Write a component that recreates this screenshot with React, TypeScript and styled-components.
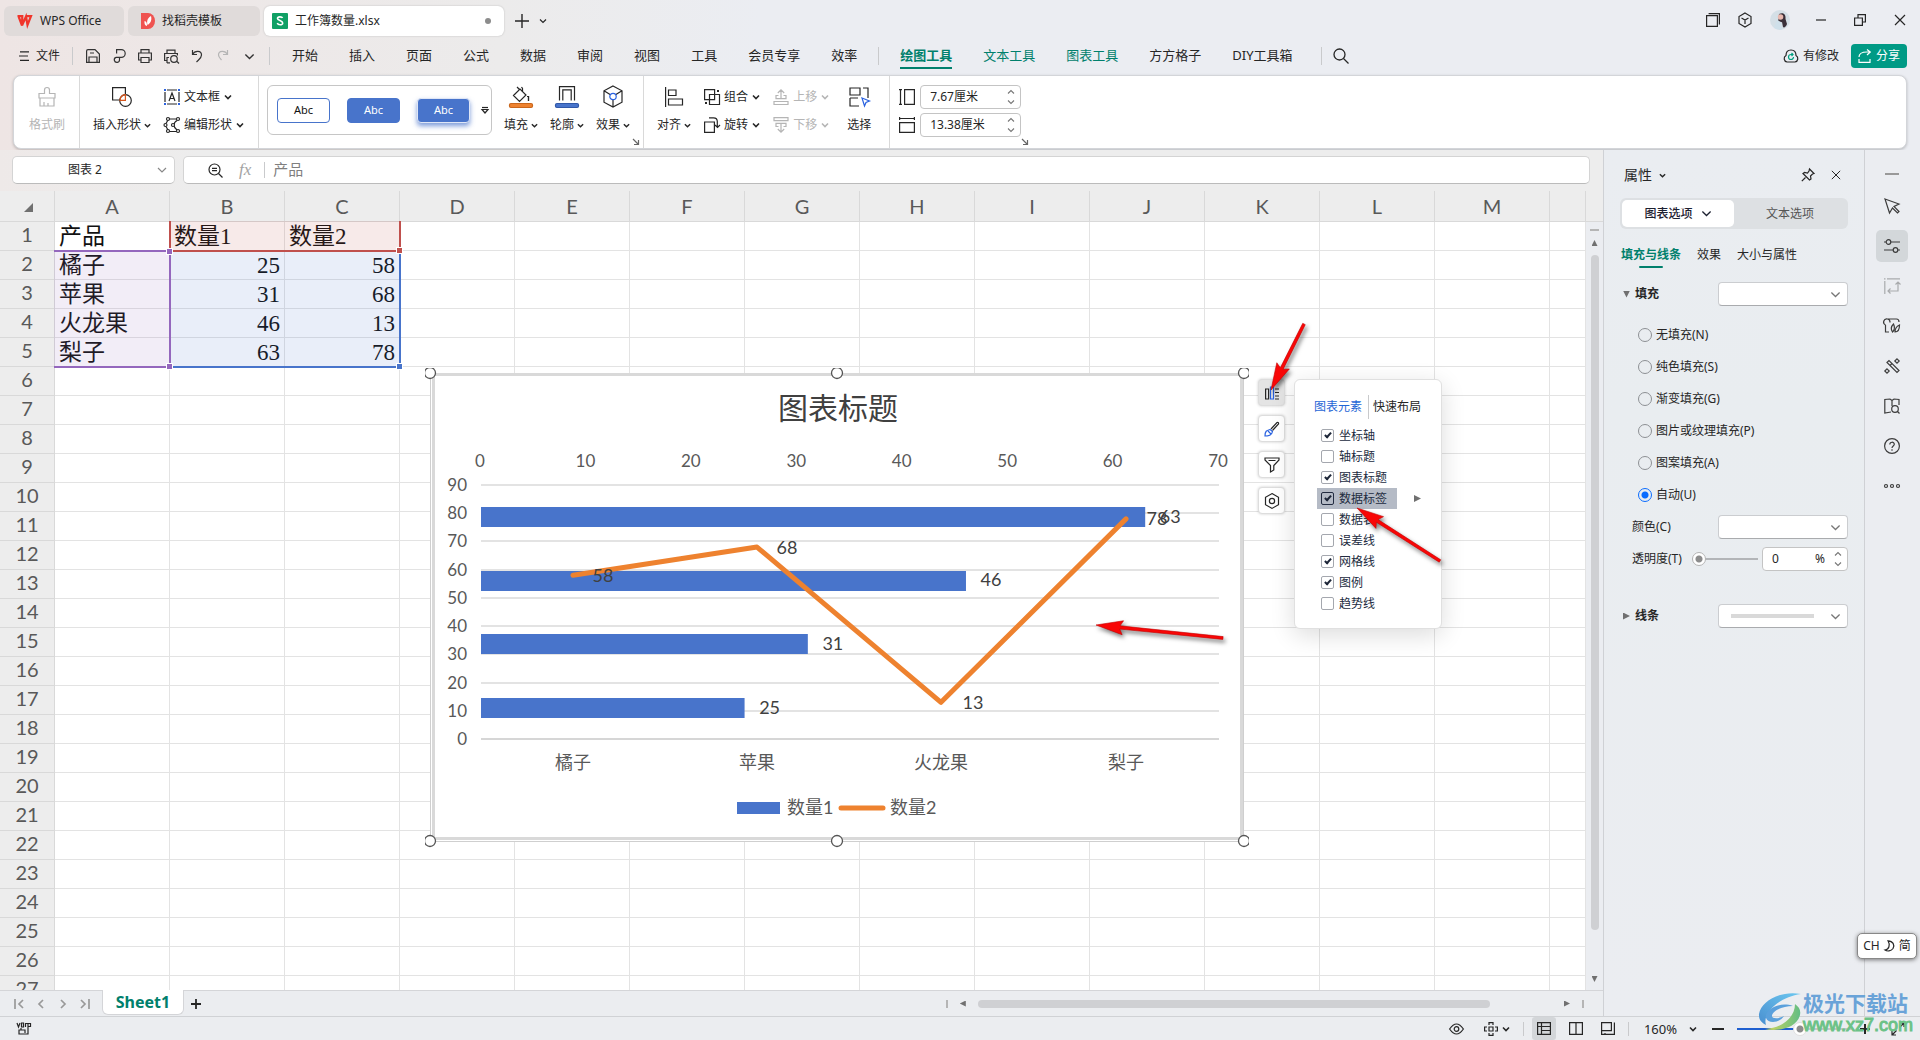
import React from "react";
import styled, { createGlobalStyle, css } from "styled-components";

const ui = `"Noto Sans", "Noto Sans CJK SC", sans-serif`;
const green = "#00806c";
const blue = "#4874cb";
const orange = "#ee822f";

const Global = createGlobalStyle`
  *, *::before, *::after { box-sizing: border-box; }
  body { margin: 0; overflow: hidden; background: #ebedf1; }
  button, input, select { font: inherit; color: inherit; margin: 0; }
  button { border: 0; padding: 0; background: none; white-space: nowrap; }
`;

const App_ = styled.div`
  display: flex; flex-direction: column; height: 100vh; overflow: hidden;
  font: 12px/20px ${ui}; color: #262626;
  background: linear-gradient(90deg, #eee5e4 0, #ecebeb 500px, #ebedf2 760px);
`;

/* ---------- icons ---------- */
type IcProps = { w?: number; h?: number; box?: string; sw?: number; children: React.ReactNode };
const Svg = styled.svg`display: block; flex: none; fill: none; stroke: currentColor; overflow: visible;`;
const Ic = ({ w = 16, h, box, sw = 1.2, children }: IcProps) => (
  <Svg width={w} height={h ?? w} viewBox={box ?? `0 0 ${w} ${h ?? w}`} strokeWidth={sw} aria-hidden="true">{children}</Svg>
);
const Chev = ({ s = 7, sw = 1.6 }: { s?: number; sw?: number }) => (
  <Ic w={s} box="0 0 8 8" sw={sw}><path d="M1 2.5l3 3 3-3" /></Ic>
);
const Close = ({ s = 12 }: { s?: number }) => <Ic w={s} box="0 0 12 12"><path d="M1 1l10 10M11 1L1 11" /></Ic>;

/* ---------- title bar ---------- */
const TitleBar = styled.header`display: flex; align-items: flex-start; gap: 4px; padding: 6px 14px 3px 4px; flex: none;`;
const DocTab = styled.button<{ $w: number; $on?: boolean }>`
  display: flex; align-items: center; gap: 7px; width: ${p => p.$w}px; height: 30px; border-radius: 6px;
  padding: 0 ${p => (p.$on ? 13 : 12)}px 0 ${p => (p.$on ? 8 : 13)}px;
  background: ${p => (p.$on ? "#fff" : "#e0dbda")};
  ${p => p.$on && css`box-shadow: 0 0 2px #bbb;`}
`;
const Dot = styled.i`width: 6px; height: 6px; border-radius: 50%; background: #8c8c8c; margin-left: auto;`;
const NewTab = styled.div`display: flex; align-items: center; gap: 10px; height: 30px; padding-left: 7px;`;
const PlainBtn = styled.button`display: flex; align-items: center; justify-content: center; gap: 4px;`;
const WinControls = styled.div`display: flex; align-items: center; gap: 18px; height: 28px; margin-left: auto;`;
const WinEnd = styled.div`display: flex; align-items: center; gap: 28px; padding-left: 8px;`;

/* ---------- menu bar ---------- */
const MenuBar = styled.nav`display: flex; align-items: center; height: 34px; margin-bottom: 2px; padding: 0 13px 0 19px; flex: none;`;
const FileBtn = styled(PlainBtn)`gap: 7px;`;
const VSep = styled.i<{ $l: number; $r: number; $h?: number }>`
  flex: none; width: 1px; height: ${p => p.$h ?? 18}px; margin: 0 ${p => p.$r}px 0 ${p => p.$l}px; background: #c9cacc;
`;
const QuickBtn = styled.button<{ $dim?: boolean }>`
  display: flex; align-items: center; justify-content: center; width: 26px; height: 26px; color: ${p => (p.$dim ? "#b5b5b5" : "#333")};
`;
const MenuGroup = styled.div`display: flex; gap: 31px;`;
const MenuItem = styled.button<{ $tone?: string }>`
  font-size: 13px; line-height: 20px; padding: 0 0 2px; border: solid transparent; border-width: 2px 0;
  ${p => p.$tone && css`color: ${green};`}
  ${p => p.$tone === "on" && css`font-weight: 700; border-bottom-color: ${green};`}
`;
const MenuRight = styled.div`display: flex; align-items: center; gap: 12px; margin-left: auto;`;
const ShareBtn = styled(PlainBtn)`width: 56px; height: 24px; border-radius: 4px; background: #009a85; color: #fff;`;

/* ---------- ribbon ---------- */
const Ribbon = styled.section`
  display: flex; flex: none; margin: 0 13px 1px; height: 74px; border-radius: 8px; background: #fff;
  border: 1px solid #d3d5d9; box-shadow: 0 1px 3px rgba(0,0,0,.22);
`;
const Group = styled.div<{ $pl?: number; $pr?: number; $gap?: number }>`
  display: flex; flex: none; gap: ${p => p.$gap ?? 12}px; padding: 7px ${p => p.$pr ?? 13}px 0 ${p => p.$pl ?? 13}px;
  & + & { border-left: 1px solid #d9d9d9; }
`;
const Big = styled.button<{ $dim?: boolean }>`
  display: flex; flex-direction: column; align-items: center; height: 56px; color: ${p => (p.$dim ? "#b5b5b5" : "#262626")};
`;
const BigIcon = styled.span`display: flex; align-items: center; height: 28px;`;
const BigLabel = styled.span`display: flex; align-items: center; gap: 3px; height: 28px;`;
const Stack = styled.div<{ $end?: boolean }>`display: flex; flex-direction: column; padding-right: ${p => (p.$end ? 5 : 0)}px;`;
const Small = styled.button<{ $dim?: boolean }>`
  display: flex; align-items: center; gap: 4px; height: 28px; color: ${p => (p.$dim ? "#b5b5b5" : "#262626")};
`;
const Gallery = styled.div`
  display: flex; align-items: center; justify-content: space-between; width: 225px; height: 50px; margin-top: 2px; padding: 0 3px 0 9px;
  border: 1px solid #c6c6c6; border-radius: 6px;
`;
const Styles = styled.div`display: flex; gap: 17px;`;
const Style = styled.button<{ $v: number }>`
  width: 53px; height: 25px; border-radius: 4px; border: 1px solid ${blue}; font-size: 11px; line-height: 22px;
  background: ${p => (p.$v ? blue : "#fff")}; color: ${p => (p.$v ? "#fff" : "#111")};
  ${p => p.$v === 2 && css`border-color: #dfe6f6; box-shadow: 0 3px 5px rgba(72,116,203,.7);`}
`;
const Launcher = styled.button`align-self: flex-end; margin-bottom: 2px; margin-left: -10px; color: #666;`;
const SizeLauncher = styled(Launcher)`margin-left: 0;`;
const SizeRow = styled.label`display: flex; align-items: center; gap: 5px; height: 28px;`;
const Spin = styled.span<{ $w: number }>`
  display: flex; align-items: center; width: ${p => p.$w}px; height: 24px; padding: 0 5px 0 9px;
  border: 1px solid #c4c4c4; border-radius: 4px; background: #fff;
`;
const SpinInput = styled.input`flex: 1; min-width: 0; border: 0; padding: 0; outline: 0; background: none; font-size: 12px;`;

const BigB = ({ icon, label, dim, drop = true }: { icon: React.ReactNode; label: string; dim?: boolean; drop?: boolean }) => (
  <Big $dim={dim}><BigIcon>{icon}</BigIcon><BigLabel>{label}{drop && <Chev />}</BigLabel></Big>
);
const SmallB = ({ icon, label, dim }: { icon: React.ReactNode; label: string; dim?: boolean }) => (
  <Small $dim={dim}>{icon}{label}<Chev s={8} /></Small>
);
const Arrows = () => <Ic w={8} h={16} sw={1.1}><path d="M1 4.500l3-3 3 3M1 11.500l3 3 3-3" stroke="#777" /></Ic>;
const LaunchIcon = () => <Ic w={8} box="0 0 8 8"><path d="M1 1l5 5M6.500 2v4.500H2" /></Ic>;

/* ---------- body ---------- */
const Body = styled.div`display: flex; flex: 1; min-height: 0;`;
const Left = styled.main`display: flex; flex-direction: column; flex: 1; min-width: 0; background: linear-gradient(90deg, #eee9e8, #ededed 200px);`;
const FormulaRow = styled.div`display: flex; gap: 8px; flex: none; padding: 6px 13px 7px 12px;`;
const NameBox = styled.label`
  display: flex; align-items: center; width: 163px; height: 28px; padding: 0 7px 0 0; background: #fff;
  border: 1px solid #d4d4d4; border-bottom-color: #bbb; border-radius: 5px;
`;
const NameInput = styled.input`flex: 1; min-width: 0; border: 0; outline: 0; padding: 0; text-align: center; background: none;`;
const FormulaBox = styled.label`
  display: flex; align-items: center; flex: 1; height: 28px; padding-left: 24px; background: #fff;
  border: 1px solid #d4d4d4; border-bottom-color: #bbb; border-radius: 5px;
`;
const Fx = styled.span`font: italic 17px "Liberation Serif", serif; color: #a3a3a3; margin-left: 16px;`;
const FormulaInput = styled.input`flex: 1; border: 0; outline: 0; padding: 0 0 2px; background: none; font-size: 15px; line-height: 20px; color: #7f7f7f;`;

const SheetArea = styled.div`display: flex; flex: 1; min-height: 0;`;
const Canvas = styled.div`position: relative; flex: 1; min-width: 0; overflow: hidden; background: #fff;`;
const Grid = styled.table`
  table-layout: fixed; width: 100%; border-collapse: separate; border-spacing: 0;
  th, td { padding: 0; height: 29px; border-right: 1px solid #e3e3e3; border-bottom: 1px solid #e3e3e3; overflow: hidden; white-space: nowrap; }
  th { background: #ededed; color: #595959; font: 400 20px/24px Lato, sans-serif; border-color: #d9d9d9; vertical-align: top; }
  thead th { height: 31px; line-height: 30px; }
  td { font: 23px/28px "Liberation Serif", "Noto Sans CJK SC", serif; color: #111; }
`;
const Col = styled.col<{ $w?: number }>`${p => p.$w && css`width: ${p.$w}px;`}`;
const CellText = styled.div<{ $num: boolean }>`height: 28px; padding: 1px 4px 0; line-height: 28px; text-align: ${p => (p.$num ? "right" : "left")};`;
const Corner = styled.i`display: block; margin: 12px 0 0 24px; width: 9px; height: 9px; background: #707070; clip-path: polygon(100% 0, 100% 100%, 0 100%);`;

const Range = styled.div<{ $c: number; $r: number; $cs: number; $rs: number; $color: string; $fill: string; $sides: string }>`
  position: absolute; pointer-events: none;
  left: ${p => 54 + 115 * p.$c}px; top: ${p => 30 + 29 * p.$r}px;
  width: ${p => 115 * p.$cs + 2}px; height: ${p => 29 * p.$rs + 2}px;
  border: 0 solid ${p => p.$color}; border-width: ${p => p.$sides}; background: ${p => p.$fill}; background-clip: padding-box;
`;
const Knob = styled.i<{ $x: string; $y: string; $color: string }>`
  position: absolute; width: 7px; height: 7px; border: 1px solid #fff; background: ${p => p.$color};
  ${p => p.$x}: -4px; ${p => p.$y}: -4px;
`;

const ChartBox = styled.figure`position: absolute; left: 425px; top: 177px; margin: 0; width: 824px; height: 480px;`;
const ArrowLayer = styled.div`position: absolute; left: 1090px; top: 119px; width: 360px; height: 340px; pointer-events: none; filter: drop-shadow(2px 3px 2px rgba(0,0,0,.5));`;
const ChartTools = styled.div`position: absolute; left: 1258px; top: 188px; display: flex; flex-direction: column; gap: 9px;`;
const ToolBtn = styled.button<{ $on?: boolean }>`
  display: flex; align-items: center; justify-content: center; width: 27px; height: 27px; border-radius: 4px;
  background: ${p => (p.$on ? "#e4e4e4" : "#fff")}; border: 1px solid #ddd; box-shadow: 0 0 3px rgba(0,0,0,.2);
`;
const Popup = styled.section`
  position: absolute; left: 1294px; top: 188px; width: 148px; padding: 15px 20px 14px 19px; background: #fff; border: 1px solid #e0e0e0;
  border-radius: 6px; box-shadow: 0 6px 24px rgba(0,0,0,.14);
`;
const PopupTabs = styled.div`display: flex; align-items: center; height: 24px; margin-bottom: 6px;`;
const PopupTab = styled.button<{ $on?: boolean }>`color: ${p => (p.$on ? "#1f66d6" : "#262626")};`;
const CheckList = styled.ul`list-style: none; margin: 0; padding: 0;`;
const CheckRow = styled.li`display: flex; align-items: center; justify-content: space-between; height: 21px; padding-left: 3px;`;
const CheckLabel = styled.label<{ $on?: boolean }>`
  display: flex; align-items: center; gap: 5px; width: 80px; height: 21px; padding-left: 4px; color: #222b40;
  background: ${p => (p.$on ? "#b5bbc6" : "none")};
`;
const Check = styled.input<{ $on?: boolean }>`
  appearance: none; width: 13px; height: 13px; border: 1px solid ${p => (p.$on ? "#222b40" : "#a4a7ae")}; border-radius: 2px;
  display: grid; place-items: center;
  &:checked::after { content: ""; width: 4px; height: 7px; border: solid #1d2638; border-width: 0 2px 2px 0; transform: rotate(42deg); margin-bottom: 2px; }
`;
const Tri = styled.i<{ $d: "r" | "d" | "l" | "u"; $s?: number }>`
  flex: none; width: ${p => p.$s ?? 6}px; height: ${p => p.$s ?? 6}px; background: #707070;
  clip-path: polygon(${p => ({ r: "0 0, 100% 50%, 0 100%", l: "100% 0, 0 50%, 100% 100%", d: "0 0, 100% 0, 50% 100%", u: "0 100%, 50% 0, 100% 100%" }[p.$d])});
`;

const VScroll = styled.div`
  display: flex; flex-direction: column; align-items: center; gap: 9px; width: 17px; margin-top: 30px; padding: 7px 0 8px;
  border-top: 1px solid #d9d9d9; background: #ebedf1; flex: none;
`;
const VThumb = styled.i`flex: 1; width: 8px; margin-bottom: 37px; border-radius: 4px; background: #cfd0d3;`;
const SplitV = styled.i`width: 9px; height: 2px; background: #b5b5b5;`;

const SheetBar = styled.div`display: flex; align-items: center; flex: none; height: 26px; border-top: 1px solid #d4d5d8; background: #ebedf0;`;
const NavBtns = styled.div`display: flex; align-items: center; gap: 13px; width: 102px; padding-left: 14px; color: #999;`;
const SheetTab = styled.button`
  align-self: flex-start; height: 25px; margin-top: -1px; width: 82px; background: #fff; color: ${green}; font-size: 16px; font-weight: 700; line-height: 24px;
  border: 1px solid #d4d5d8; border-top: 0; border-radius: 0 0 6px 6px;
`;
const HScroll = styled.div`display: flex; flex: none; align-items: center; gap: 12px; width: 41%; margin-left: auto; padding-right: 19px;`;
const HThumb = styled.i`flex: 1; height: 8px; margin-right: 62px; border-radius: 4px; background: #cfd0d3;`;
const SplitH = styled.i`width: 2px; height: 8px; background: #b5b5b5;`;

/* ---------- property panel ---------- */
const Panel = styled.aside`flex: none; width: 261px; padding: 13px 16px 0; border-left: 1px solid #cfd1d5; background: linear-gradient(180deg, #eaedf1, #e9edf0 30%, #ebedf1);`;
const PanelHead = styled.div`display: flex; align-items: center; gap: 16px; height: 24px; padding: 0 7px 0 4px; margin-bottom: 11px;`;
const PanelTitle = styled.button`display: flex; align-items: center; gap: 7px; margin-right: auto; font-size: 14px;`;
const Segment = styled.div`display: flex; height: 31px; padding: 2px; border-radius: 6px; background: #dde0e3;`;
const SegBtn = styled.button<{ $on?: boolean }>`
  display: flex; align-items: center; justify-content: center; gap: 8px; flex: 1; border-radius: 5px;
  ${p => (p.$on ? css`background: #fff; font-weight: 500; color: #1c2030;` : css`color: #555;`)}
`;
const PTabs = styled.div`display: flex; gap: 16px; margin: 15px 0 13px 1px;`;
const PTab = styled.button<{ $on?: boolean }>`
  display: flex; flex-direction: column; align-items: center; line-height: 22px; height: 25px;
  ${p => p.$on && css`color: ${green}; font-weight: 700; &::after { content: ""; width: 24px; height: 2px; border-radius: 1px; background: ${green}; }`}
`;
const Field = styled.div<{ $h?: number }>`display: flex; align-items: center; justify-content: space-between; height: ${p => p.$h ?? 32}px;`;
const SectionBtn = styled.button`display: flex; align-items: center; gap: 5px; padding-left: 3px; font-weight: 700;`;
const SelectBox = styled.span`
  position: relative; display: flex; align-items: center; width: 130px; height: 24px; padding: 0 6px 0 12px; background: #fff;
  border: 1px solid #cbcdd0; border-bottom-color: #a9abae; border-radius: 4px; color: #777;
`;
const Select = styled.select`position: absolute; inset: 0; width: 100%; appearance: none; border: 0; background: none; outline: 0;`;
const LineSample = styled.i`width: 83px; height: 4px; background: #d9d9d9;`;
const SelChev = styled.span`margin-left: auto;`;
const Radios = styled.div`display: flex; flex-direction: column; padding: 13px 0 0 18px;`;
const RadioLabel = styled.label`display: flex; align-items: center; gap: 4px; height: 32px;`;
const Radio = styled.input`
  appearance: none; width: 14px; height: 14px; border: 1px solid #8d9094; border-radius: 50%;
  &:checked { border-color: #0a6cff; background: radial-gradient(circle, #0a6cff 0 3px, transparent 4px); }
`;
const FieldLabel = styled.label`padding-left: 12px;`;
const Slider = styled.input<{ $w: number; $fill?: string }>`
  appearance: none; width: ${p => p.$w}px; height: 14px; background: none;
  &::-webkit-slider-runnable-track { height: 2px; background: ${p => p.$fill ?? "#b3b5b8"}; }
  &::-webkit-slider-thumb { appearance: none; width: 14px; height: 14px; margin-top: -6px; border-radius: 50%; border: 1px solid ${p => (p.$fill ? "#e0e0e0" : "#b5b5b5")}; background: radial-gradient(circle, #8c8c8c 0 3px, #fff 4px); }
`;
const AlphaSlider = styled(Slider)`margin: 0 4px 0 auto;`;
const ZoomSlider = styled(Slider)`margin-left: 5px;`;

const SideBar = styled.nav`flex: none; width: 56px; display: flex; flex-direction: column; align-items: center; gap: 8px; padding: 8px 1px 0 0; border-left: 1px solid #cfd1d5; background: #ebedf1;`;
const SideBtn = styled.button<{ $on?: boolean; $dim?: boolean }>`
  display: flex; align-items: center; justify-content: center; width: 32px; height: 32px; border-radius: 5px;
  background: ${p => (p.$on ? "#d3d7da" : "none")}; color: ${p => (p.$dim ? "#a9abad" : "#3c3c3c")};
`;
const SideMin = styled(SideBtn)`height: 32px; margin-bottom: -8px; color: #999;`;

/* ---------- status bar ---------- */
const Status = styled.footer`display: flex; align-items: center; flex: none; height: 24px; padding: 0 15px 0 17px; border-top: 1px solid #d0d2d5; background: #ebedf0;`;
const StatusRight = styled.div`display: flex; align-items: center; margin-left: auto; gap: 8px;`;
const ViewBtn = styled.button<{ $on?: boolean }>`display: flex; align-items: center; justify-content: center; width: 24px; height: 23px; background: ${p => (p.$on ? "#d3d6d9" : "none")}; border-radius: 3px;`;
const Zoom = styled.button`display: flex; align-items: center; gap: 12px; font-size: 13px; margin: 0 7px;`;

const ImeBadge = styled.div`
  position: absolute; right: 3px; bottom: 81px; width: 60px; height: 26px; display: flex; align-items: center; justify-content: center; gap: 4px;
  background: #fff; border: 1px solid #888; border-radius: 5px; box-shadow: 0 1px 4px rgba(0,0,0,.5);
`;
const Watermark = styled.div`position: absolute; right: 10px; bottom: 6px; display: flex; align-items: center; gap: 2px; pointer-events: none;`;
const WmText = styled.div`display: flex; flex-direction: column; width: 107px; white-space: nowrap;`;
const WmTop = styled.span`font-size: 21px; line-height: 26px; font-weight: 700; color: #6aa3d8;`;
const WmUrl = styled.span`font: 400 18px/18px "Liberation Sans", sans-serif; color: #6cc287; -webkit-text-stroke: 1px #6cc287;`;

/* ---------- data ---------- */
const cols = "ABCDEFGHIJKLM".split("");
const cells: (string | number)[][] = [["产品", "数量1", "数量2"], ["橘子", 25, 58], ["苹果", 31, 68], ["火龙果", 46, 13], ["梨子", 63, 78]];
const elements: [string, boolean][] = [["坐标轴", true], ["轴标题", false], ["图表标题", true], ["数据标签", true], ["数据表", false], ["误差线", false], ["网格线", true], ["图例", true], ["趋势线", false]];
const fills = ["无填充(N)", "纯色填充(S)", "渐变填充(G)", "图片或纹理填充(P)", "图案填充(A)", "自动(U)"];

const Label = styled.text<{ $size?: number; $c?: string }>`
  font: ${p => p.$size ?? 18}px Lato, "Noto Sans CJK SC", sans-serif; fill: ${p => p.$c ?? "#404040"};
`;

const Chart = () => {
  const x = (v: number) => 481 + (v * 738) / 70;
  const y = (v: number) => 739 - (v * 254) / 90;
  const series2: [number, number, number][] = [[573, 58, 603], [757, 68, 787], [941, 13, 973], [1126, 78, 1157]];
  const bars = [25, 31, 46, 63];
  return (
    <ChartBox aria-label="图表标题">
      <svg width="824" height="480" viewBox="425 368 824 480">
        <rect x="430.500" y="373.500" width="813" height="468" fill="#fff" stroke="#cfcfcf" />
        <rect x="433.500" y="374.500" width="808" height="464" fill="#fff" stroke="#d9d9d9" strokeWidth="3" />
        {Array.from({ length: 10 }, (_, i) => (
          <g key={i}>
            <path d={`M481 ${Math.round(y(i * 10))}H1219`} stroke={i ? "#e3e3e3" : "#d6d6d6"} strokeWidth="2" />
            <Label x="467" y={y(i * 10) + 6} textAnchor="end" $size={17} $c="#595959">{i * 10}</Label>
          </g>
        ))}
        {Array.from({ length: 8 }, (_, i) => (
          <Label key={i} x={x(i * 10) - 1} y="467" textAnchor="middle" $size={17} $c="#595959">{i * 10}</Label>
        ))}
        {bars.map((v, i) => <rect key={v} x="481" y={698 - Math.round(i * 63.7)} width={x(v) - 481} height="20" fill={blue} />)}
        <polyline points={series2.map(([px, v]) => `${px},${y(v)}`).join(" ")} fill="none" stroke={orange} strokeWidth="5" strokeLinecap="round" strokeLinejoin="round" />
        {bars.map((v, i) => <Label key={v} x={x(v) + 25} y={(i === 3 ? 523 : 714 - i * 64)} textAnchor="middle">{v}</Label>)}
        {series2.map(([, v, lx]) => <Label key={v} x={lx} y={v === 78 ? 525 : v === 68 ? 554 : v === 58 ? 582 : 709} textAnchor="middle">{v}</Label>)}
        <Label x="838" y="419" textAnchor="middle" $size={30}>图表标题</Label>
        {series2.map(([px], i) => <Label key={px} x={px} y="769" textAnchor="middle" $c="#595959">{cells[i + 1][0]}</Label>)}
        <rect x="737" y="802" width="43" height="12" fill={blue} />
        <Label x="787" y="814" $c="#595959">数量1</Label>
        <path d="M841 808H883" stroke={orange} strokeWidth="5" strokeLinecap="round" />
        <Label x="890" y="814" $c="#595959">数量2</Label>
        {[373, 841].map(cy => [430, 837, 1244].map(cx => <circle key={`${cx}-${cy}`} cx={cx} cy={cy} r="5.500" fill="#fff" stroke="#555" strokeWidth="1.300" />))}
      </svg>
    </ChartBox>
  );
};

const Arrow = ({ tip, tail }: { tip: [number, number]; tail: [number, number] }) => {
  const dx = tail[0] - tip[0], dy = tail[1] - tip[1], l = Math.hypot(dx, dy);
  const at = (a: number, b: number) => `${tip[0] + (dx * a - dy * b) / l},${tip[1] + (dy * a + dx * b) / l}`;
  return <polygon fill="#f80606" stroke="#c40000" strokeWidth=".6" points={[at(0, 0), at(27, 7), at(24, 1.6), at(l, 1.4), at(l, -1.4), at(24, -1.6), at(27, -7)].join(" ")} />;
};

const MiniBtn = ({ label, children }: { label: string; children: React.ReactNode }) => <PlainBtn aria-label={label}>{children}</PlainBtn>;

export default function App() {
  return (
    <App_>
      <Global />
      <TitleBar>
        <DocTab $w={120}>
          <Ic w={16} h={12} box="0 0 16 12" sw={2.2}><path d="M.5 1.200h4.800L5 10.500 1.800 2M5 10.500L9 1.500l1.500 8.500L14 1.200H9.800" stroke="#f0352b" /></Ic>
          WPS Office
        </DocTab>
        <DocTab $w={132}>
          <Ic w={14} h={16}><path d="M0 0h7a7 8 0 0 1 0 16H0z" fill="#ef5350" stroke="none" /><path d="M3.500 8c2 .5 2.500 2 2.500 5-2-.5-2.800-2-2.500-5zM6.500 12c-1-4 0-7 3.500-9 1 4 0 7-3.500 9z" fill="#fff" stroke="none" /></Ic>
          找稻壳模板
        </DocTab>
        <DocTab $w={240} $on>
          <Ic w={16}><rect width="16" height="16" rx="1" fill="#10a065" stroke="none" /><path d="M10.500 5C10 3.500 5.500 3.300 5.500 5.500S10.700 7.500 10.700 10 6 12.300 5.300 10" stroke="#fff" strokeWidth="1.600" /></Ic>
          工作簿数量.xlsx
          <Dot />
        </DocTab>
        <NewTab>
          <MiniBtn label="新建"><Ic w={14} sw={1.4}><path d="M7 0v14M0 7h14" /></Ic></MiniBtn>
          <MiniBtn label="标签列表"><Chev s={8} sw={1.2} /></MiniBtn>
        </NewTab>
        <WinControls>
          <MiniBtn label="窗口"><Ic w={14}><path d="M.6 2.600h10.800v10.800H.6zM2.600.6H13.400v11" /></Ic></MiniBtn>
          <MiniBtn label="应用"><Ic w={14}><path d="M7 0l6 3.500v7L7 14l-6-3.500v-7zM3.500 5L7 7l3.500-2M7 7v4" /></Ic></MiniBtn>
          <MiniBtn label="用户"><Ic w={20}><circle cx="10" cy="10" r="10" fill="#d4dfe6" stroke="none" /><path d="M9 4c5-2 7 1 6.500 5L17 14c-1 3-3 4-4 3l-1-5-4 1z" fill="#3a3039" stroke="none" /><circle cx="10.500" cy="7" r="2.800" fill="#e8b9b0" stroke="none" /><path d="M4 18l3-8 4 2 1 7.500q-4 1-8-1.500z" fill="#cfe0ea" stroke="none" /></Ic></MiniBtn>
          <WinEnd>
            <MiniBtn label="最小化"><Ic w={10}><path d="M0 5h10" /></Ic></MiniBtn>
            <MiniBtn label="还原"><Ic w={12}><path d="M.6 4h7.800v7.400H.6zM4 4V.6h7.400V8H8.400" /></Ic></MiniBtn>
            <MiniBtn label="关闭"><Close /></MiniBtn>
          </WinEnd>
        </WinControls>
      </TitleBar>

      <MenuBar>
        <FileBtn><Ic w={10}><path d="M1 .8h9M0 5h9M1 9.400h9" /></Ic>文件</FileBtn>
        <VSep $l={12} $r={7} />
        <QuickBtn aria-label="保存"><Ic w={14}><path d="M.6 2q0-1.400 1.400-1.400h7L13.400 5v8.400H.6zM3 13V8h8v5M4 4h4" /></Ic></QuickBtn>
        <QuickBtn aria-label="输出为PDF"><Ic w={14}><path d="M4.600 4.500V.6h4.700a3.900 3.900 0 0 1 0 7.800H4M7.500 8.400v2.200a2.600 2.600 0 1 1-3.500-2.200" /></Ic></QuickBtn>
        <QuickBtn aria-label="打印"><Ic w={14}><path d="M3 4V.6h8V4M3 11H.6V4h12.800v7H11M3 8.500h8v5H3z" /></Ic></QuickBtn>
        <QuickBtn aria-label="打印预览"><Ic w={15} box="0 0 15 14"><path d="M3 4V.6h8V4M3 11H.6V4h12.800v2M3 13.400V8h2M3 13.400h3M13 12l2 2" /><circle cx="10" cy="9.500" r="3.300" /></Ic></QuickBtn>
        <QuickBtn aria-label="撤销"><Ic w={12} h={14}><path d="M1.500 1v4.500H6M1.500 5.500C4 1 10.500 1.500 10.500 6c0 3-2 4-5 7" /></Ic></QuickBtn>
        <QuickBtn aria-label="恢复" $dim><Ic w={12} h={14}><path d="M10.500 1v4.500H6M10.500 5.500C8 1 1.500 1.500 1.500 6c0 2 1 3 3 5" /></Ic></QuickBtn>
        <QuickBtn aria-label="更多"><Chev s={11} sw={1} /></QuickBtn>
        <VSep $l={7} $r={22} />
        <MenuGroup>{["开始", "插入", "页面", "公式", "数据", "审阅", "视图", "工具", "会员专享", "效率"].map(t => <MenuItem key={t}>{t}</MenuItem>)}</MenuGroup>
        <VSep $l={21} $r={21} />
        <MenuGroup>
          <MenuItem $tone="on">绘图工具</MenuItem><MenuItem $tone="green">文本工具</MenuItem><MenuItem $tone="green">图表工具</MenuItem>
          <MenuItem>方方格子</MenuItem><MenuItem>DIY工具箱</MenuItem>
        </MenuGroup>
        <VSep $l={28} $r={11} />
        <MiniBtn label="搜索"><Ic w={16} sw={1.3}><circle cx="6.500" cy="6.500" r="5.500" /><path d="M10.500 10.500l5 5" /></Ic></MiniBtn>
        <MenuRight>
          <PlainBtn><Ic w={16} h={14}><path d="M4 13a3.500 3.500 0 0 1-1-6.500C3 3 5 1 8 1s5 2 5 5.500A3.500 3.500 0 0 1 12 13z" /><path d="M10.500 8A2.500 2.500 0 1 1 8 5.500h2M8.500 4L10 5.500 8.500 7" stroke="#00a080" /></Ic>有修改</PlainBtn>
          <ShareBtn><Ic w={14}><path d="M1 8c0-3.500 3-5 8-5h3M9 .5L12.300 3 9 6M1 10v3.300h11V10" /></Ic>分享</ShareBtn>
        </MenuRight>
      </MenuBar>

      <Ribbon>
        <Group $pl={15} $pr={14}>
          <BigB dim drop={false} label="格式刷" icon={<Ic w={18} h={20}><path d="M1 11V6.500h5.500V3a2.500 2.500 0 0 1 5 0v3.500H17V11zM2 11v8h14v-8M6 19v-4M10 19v-3" /></Ic>} />
        </Group>
        <Group $pr={14} $gap={13}>
          <BigB label="插入形状" icon={<Ic w={20}><path d="M8 13H.6V.6h12.800V7" /><circle cx="13.500" cy="13.500" r="5.800" /><path d="M8 13.400V13a6 6 0 0 1 5.400-5.400v5.800z" stroke="#d8561c" /></Ic>} />
          <Stack>
            <SmallB label="文本框" icon={<Ic w={16}><path d="M3 1h10M3 15h10M1 3v10M15 3v10M5 12l3-8 3 8M6 9.500h4" /><path d="M0 0h2v2H0zM14 0h2v2h-2zM0 14h2v2H0zM14 14h2v2h-2z" fill="#2a62e0" stroke="none" /></Ic>} />
            <SmallB label="编辑形状" icon={<Ic w={16}><path d="M5 2h8M2 6.500L4 3M2 9.500L4 13M5 14.500h8M13 3.500C9 6 9 10 13 13" /><g fill="#fff"><circle cx="4" cy="2" r="1.500" /><circle cx="14" cy="2" r="1.500" /><circle cx="1.500" cy="8" r="1.500" /><circle cx="4" cy="14" r="1.500" /><circle cx="14" cy="14" r="1.500" /><circle cx="9" cy="8" r="1.500" /></g></Ic>} />
          </Stack>
        </Group>
        <Group $pl={8} $pr={3}>
          <Gallery>
            <Styles><Style $v={0}>Abc</Style><Style $v={1}>Abc</Style><Style $v={2}>Abc</Style></Styles>
            <MiniBtn label="更多样式"><Ic w={6}><path d="M0 .5h6" /><path d="M0 2.500h6L3 6z" /></Ic></MiniBtn>
          </Gallery>
          <BigB label="填充" icon={<Ic w={24} h={22}><path d="M4.500 9.500L11 3l6 6-6.500 6.500zM10.500 3.500L8 1M13.500 5.500V2.500l-1-1.500M19.500 10v5" /><path d="M18 10.500h1.500V15" /><rect x=".5" y="17.500" width="23" height="4" rx="1.500" fill={orange} stroke="#c9661c" /></Ic>} />
          <BigB label="轮廓" icon={<Ic w={24} h={22}><path d="M4.500 14.500V.6h15v13.900M7.800 14.500V3.800h8.400v10.700" /><rect x=".5" y="17.500" width="23" height="4" rx="1.500" fill={blue} stroke="#3058a8" /></Ic>} />
          <BigB label="效果" icon={<Ic w={20} h={22}><path d="M10 0l9 4.800v11.400L10 21l-9-4.800V4.800zM1 4.800l6.500 4M19 4.800l-6.500 4M10 21v-7" /><circle cx="10" cy="10.500" r="3.200" stroke="#2a62e0" /></Ic>} />
          <Launcher aria-label="形状设置"><LaunchIcon /></Launcher>
        </Group>
        <Group $gap={13} $pr={18}>
          <BigB label="对齐" icon={<Ic w={18} h={20}><path d="M.6 0v20M3.500 3h7.500v5.500H3.500zM3.500 12h14v6h-14z" /></Ic>} />
          <Stack>
            <SmallB label="组合" icon={<Ic w={16}><path d="M.6.6h10v10H.6zM5.500 5.500h10v10h-10z" /><path d="M13 1h2v2h-2zM1 13h2v2H1z" fill="currentColor" stroke="none" /></Ic>} />
            <SmallB label="旋转" icon={<Ic w={16}><path d="M.6 5h9.800v10.400H.6zM5 .8h4.500q3.800 0 3.800 3.800v5.800M11 8l2.500 2.500L16 8" /></Ic>} />
          </Stack>
          <Stack $end>
            <SmallB dim label="上移" icon={<Ic w={16}><path d="M8 1v8.500M4.800 4L8 .8 11.200 4M5.500 6.500H3v3.200h10V6.500h-2.500M1 12.500h14v3H1z" /></Ic>} />
            <SmallB dim label="下移" icon={<Ic w={16}><path d="M8 6.500V15M4.800 12L8 15.200 11.200 12M5.500 9.500H3V6.300h10v3.200h-2.500M1 .6h14v3H1z" /></Ic>} />
          </Stack>
          <BigB drop={false} label="选择" icon={<Ic w={22}><path d="M2 2h10v7H2zM15 2h5v10M2 12v8h9M2 12h8M20 9v2" /><path d="M14 12l7.500 3-3.500 1.500L16.500 20z" stroke="#2a62e0" /></Ic>} />
        </Group>
        <Group $pl={9} $gap={0}>
          <Stack>
            <SizeRow aria-label="高度"><Ic w={16}><path d="M1.500 0v16M0 .6h3M0 15.400h3M5.600.6h9.800v14.800H5.600z" /></Ic><Spin $w={101}><SpinInput defaultValue="7.67厘米" aria-label="高度" /><Arrows /></Spin></SizeRow>
            <SizeRow aria-label="宽度"><Ic w={16}><path d="M0 1.500h16M.6 0v3M15.400 0v3M.6 5.600h14.800v9.800H.6z" /></Ic><Spin $w={101}><SpinInput defaultValue="13.38厘米" aria-label="宽度" /><Arrows /></Spin></SizeRow>
          </Stack>
          <SizeLauncher aria-label="大小设置"><LaunchIcon /></SizeLauncher>
        </Group>
      </Ribbon>

      <Body>
        <Left>
          <FormulaRow>
            <NameBox><NameInput defaultValue="图表 2" aria-label="名称框" /><Ic w={10} box="0 0 10 10"><path d="M1 3l4 4 4-4" stroke="#888" /></Ic></NameBox>
            <FormulaBox>
              <Ic w={15}><circle cx="6.500" cy="6.500" r="5.500" /><path d="M4 5.300h5M4 7.700h5M10.500 10.500l4 4" /></Ic>
              <Fx>fx</Fx><VSep $l={13} $r={8} $h={16} />
              <FormulaInput defaultValue="产品" aria-label="编辑栏" />
            </FormulaBox>
          </FormulaRow>
          <SheetArea>
            <Canvas>
              <Grid>
                <colgroup><Col $w={55} />{cols.map(c => <Col key={c} $w={115} />)}<Col /></colgroup>
                <thead><tr><th aria-label="全选"><Corner /></th>{cols.map(c => <th key={c} scope="col">{c}</th>)}<th /></tr></thead>
                <tbody>
                  {Array.from({ length: 27 }, (_, r) => (
                    <tr key={r}>
                      <th scope="row">{r + 1}</th>
                      {cols.map((c, i) => <td key={c}>{cells[r]?.[i] !== undefined && <CellText $num={typeof cells[r][i] === "number"}>{cells[r][i]}</CellText>}</td>)}
                      <td />
                    </tr>
                  ))}
                </tbody>
              </Grid>
              <Range $c={1} $r={1} $cs={2} $rs={4} $color={blue} $fill="rgba(72,116,203,.12)" $sides="0 2px 2px 0"><Knob $x="right" $y="bottom" $color={blue} /></Range>
              <Range $c={1} $r={0} $cs={2} $rs={1} $color="#c0504d" $fill="rgba(192,80,77,.12)" $sides="0 2px 2px 2px"><Knob $x="right" $y="bottom" $color="#c0504d" /></Range>
              <Range $c={0} $r={1} $cs={1} $rs={4} $color="#9467bd" $fill="rgba(148,103,189,.12)" $sides="2px 2px 2px 0"><Knob $x="right" $y="top" $color="#9467bd" /><Knob $x="right" $y="bottom" $color="#9467bd" /></Range>
              <Chart />
              <ChartTools>
                <ToolBtn $on aria-label="图表元素"><Ic w={14}><path d="M.6 3h3v10h-3zM10 3h4M10 6.500h4M10 10h4M10 13h4" /><path d="M5.500 1h3v12h-3z" stroke="#2a62e0" /></Ic></ToolBtn>
                <ToolBtn aria-label="图表样式"><Ic w={16}><path d="M7 8l6-6.500q2-.5 1.500 1.500L8.500 9.500" /><path d="M1 15c0-5 1.500-5.500 5-6.500l2.500 2C8 14 5 15 1 15zM4 10l3 3" stroke="#2a62e0" /></Ic></ToolBtn>
                <ToolBtn aria-label="图表筛选"><Ic w={16}><path d="M1 1h14v2L9.800 8.500V13L6.500 15V8.500L1 3zM4.500 3.500h7" /></Ic></ToolBtn>
                <ToolBtn aria-label="设置"><Ic w={16}><path d="M8 .6l6.500 3.700v7.400L8 15.400l-6.500-3.700V4.300z" /><circle cx="8" cy="8" r="2.600" /></Ic></ToolBtn>
              </ChartTools>
              <Popup>
                <PopupTabs><PopupTab $on>图表元素</PopupTab><VSep $l={6} $r={4} $h={24} /><PopupTab>快速布局</PopupTab></PopupTabs>
                <CheckList>
                  {elements.map(([t, on], i) => (
                    <CheckRow key={t}><CheckLabel $on={i === 3}><Check type="checkbox" defaultChecked={on} $on={i === 3} />{t}</CheckLabel>{i === 3 && <Tri $d="r" $s={7} />}</CheckRow>
                  ))}
                </CheckList>
              </Popup>
              <ArrowLayer>
                <svg width="360" height="340" viewBox="1090 310 360 340">
                  <Arrow tip={[1271, 390]} tail={[1304, 324]} />
                  <Arrow tip={[1357, 508]} tail={[1440, 561]} />
                  <Arrow tip={[1096, 625]} tail={[1223, 638]} />
                </svg>
              </ArrowLayer>
            </Canvas>
            <VScroll><SplitV /><Tri $d="u" /><VThumb /><Tri $d="d" /></VScroll>
          </SheetArea>
          <SheetBar>
            <NavBtns>
              <MiniBtn label="首张"><Ic w={10} sw={1.7}><path d="M1 0v10M9 1L5 5l4 4" /></Ic></MiniBtn>
              <MiniBtn label="上一张"><Ic w={7} h={10} sw={1.7}><path d="M6 1L2 5l4 4" /></Ic></MiniBtn>
              <MiniBtn label="下一张"><Ic w={10} sw={1.7}><path d="M4 1l4 4-4 4" /></Ic></MiniBtn>
              <MiniBtn label="末张"><Ic w={10} sw={1.7}><path d="M1 1l4 4-4 4M9 0v10" /></Ic></MiniBtn>
            </NavBtns>
            <SheetTab>Sheet1</SheetTab>
            <NewTab><MiniBtn label="新建工作表"><Ic w={10} sw={1.8}><path d="M5 0v10M0 5h10" /></Ic></MiniBtn></NewTab>
            <HScroll><SplitH /><Tri $d="l" /><HThumb /><Tri $d="r" /><SplitH /></HScroll>
          </SheetBar>
        </Left>

        <Panel>
          <PanelHead>
            <PanelTitle>属性<Chev /></PanelTitle>
            <MiniBtn label="固定"><Ic w={14}><path d="M8.500 1l4.500 4.500-1.500.5-2 2 .5 3-1.500 1L2 5.500l1.500-1 3 .5 1.500-2zM4.500 9.500L.8 13.200" /></Ic></MiniBtn>
            <MiniBtn label="关闭窗格"><Close s={10} /></MiniBtn>
          </PanelHead>
          <Segment><SegBtn $on>图表选项<Chev s={11} sw={0.9} /></SegBtn><SegBtn>文本选项</SegBtn></Segment>
          <PTabs><PTab $on>填充与线条</PTab><PTab>效果</PTab><PTab>大小与属性</PTab></PTabs>
          <Field $h={24}>
            <SectionBtn><Tri $d="d" $s={7} />填充</SectionBtn>
            <SelectBox><Select aria-label="填充"><option></option></Select><SelChev><Chev s={11} sw={0.9} /></SelChev></SelectBox>
          </Field>
          <Radios>{fills.map((f, i) => <RadioLabel key={f}><Radio type="radio" name="fill" defaultChecked={i === 5} />{f}</RadioLabel>)}</Radios>
          <Field>
            <FieldLabel htmlFor="color">颜色(C)</FieldLabel>
            <SelectBox><Select id="color"><option></option></Select><SelChev><Chev s={11} sw={0.9} /></SelChev></SelectBox>
          </Field>
          <Field>
            <FieldLabel htmlFor="alpha">透明度(T)</FieldLabel>
            <AlphaSlider $w={66} id="alpha" type="range" defaultValue={0} />
            <Spin $w={86}><SpinInput defaultValue="0" aria-label="透明度" />%<VSep $l={4} $r={4} $h={0} /><Arrows /></Spin>
          </Field>
          <Field $h={82}>
            <SectionBtn><Tri $d="r" $s={7} />线条</SectionBtn>
            <SelectBox><Select aria-label="线条"><option></option></Select><LineSample /><SelChev><Chev s={11} sw={0.9} /></SelChev></SelectBox>
          </Field>
        </Panel>

        <SideBar>
          <SideMin aria-label="收起"><Ic w={14} sw={2}><path d="M0 7h14" /></Ic></SideMin>
          <SideBtn aria-label="选择"><Ic w={16}><path d="M1 1l14 5-5 2.500 5 5-1.500 1.500-5-5L5.500 15z" /></Ic></SideBtn>
          <SideBtn $on aria-label="属性"><Ic w={16}><path d="M0 4h2M7 4h9M0 12h9M14 12h2" /><circle cx="4.500" cy="4" r="2.300" /><circle cx="11.500" cy="12" r="2.300" /></Ic></SideBtn>
          <SideBtn $dim aria-label="转换"><Ic w={16}><path d="M.8 3v13M3 .8h13M0 .8h1.500M14 4v9H4M11.500 6.500L14 4l2.500 2.500M6.500 10.500L4 13l2.500 2.500" /></Ic></SideBtn>
          <SideBtn aria-label="素材"><Ic w={16}><path d="M1.500 7V14H5M1.500 7A3.200 3.200 0 1 1 6 4.500M4 1h8.500Q15 1 15 4M8.500 14C6.500 11 7.500 8 9.500 6c1.500 3 1 6-1 8zM11 14c0-3 1-5.500 4.500-7 0 4-1 7-4.500 7z" /></Ic></SideBtn>
          <SideBtn aria-label="美化"><Ic w={16}><path d="M3 4.500L5 2.500l10 10-2 2zM6 7.500l2-2" /><path d="M13 .8L15.200 3 13 5.200 10.800 3zM3 10.800L5.200 13 3 15.200.8 13z" /></Ic></SideBtn>
          <SideBtn aria-label="查找"><Ic w={16}><path d="M7 14L.8 15V1.500L6 1l2 1.500L10 1l5 .5V7M8 2.500V8M13.500 13.500l2 2" /><circle cx="11" cy="11" r="3.300" /></Ic></SideBtn>
          <SideBtn aria-label="帮助"><Ic w={16}><circle cx="8" cy="8" r="7.400" /><path d="M5.800 6.500c0-3 4.500-3 4.500-.2C10.300 8 8 8 8 10M8 11.300v1.400" /></Ic></SideBtn>
          <SideBtn aria-label="更多"><Ic w={16}><circle cx="2" cy="8" r="1.500" /><circle cx="8" cy="8" r="1.500" /><circle cx="14" cy="8" r="1.500" /></Ic></SideBtn>
        </SideBar>
      </Body>

      <Status>
        <MiniBtn label="宏"><Ic w={14} h={12}><path d="M0 0l1.500 4L3 0M4.500 0v4h2V0zM8.500 4V.5h5v3h-2M11 0v11H2V7h6v3M4 7V5" /></Ic></MiniBtn>
        <StatusRight>
          <MiniBtn label="护眼"><Ic w={15} h={12}><path d="M.6 6Q7.500-4 14.400 6 7.500 16 .6 6z" /><circle cx="7.500" cy="6" r="2.300" /></Ic></MiniBtn>
          <VSep $l={0} $r={3} $h={0} />
          <PlainBtn aria-label="定位"><Ic w={14}><path d="M5 5h4v4H5zM5 3V.6h4V3M5 11v2.400h4V11M3 5H.6v4H3M11 5h2.400v4H11" /></Ic><Chev s={8} /></PlainBtn>
          <VSep $l={5} $r={0} $h={14} />
          <ViewBtn $on aria-label="普通视图"><Ic w={14} h={13}><path d="M.6.6h12.800v11.800H.6zM4.500.6v11.800M.6 4.500h12.800M4.500 8.500h9" /></Ic></ViewBtn>
          <ViewBtn aria-label="分页预览"><Ic w={14} h={13}><path d="M.6.6h12.800v11.800H.6zM7 .6v11.800" /></Ic></ViewBtn>
          <ViewBtn aria-label="页面布局"><Ic w={14} h={13}><path d="M.6.6h9.800v8H.6zM.6 8.600v3.800h12.800V.6M4 12v-1" /></Ic></ViewBtn>
          <VSep $l={0} $r={0} $h={14} />
          <Zoom>160%<Chev s={8} /></Zoom>
          <MiniBtn label="缩小"><Ic w={12} sw={2}><path d="M0 6h12" /></Ic></MiniBtn>
          <ZoomSlider $w={115} $fill="linear-gradient(90deg, #1f5fd0 55%, #c4c6c9 55%)" type="range" defaultValue={55} aria-label="缩放" />
          <MiniBtn label="放大"><Ic w={10} sw={2}><path d="M5 0v10M0 5h10" /></Ic></MiniBtn>
          <VSep $l={0} $r={4} $h={0} />
          <MiniBtn label="全屏"><Ic w={14}><path d="M9 1h4v4M13 1L8.500 5.500M5 13H1V9M1 13l4.500-4.500" /></Ic></MiniBtn>
        </StatusRight>
      </Status>

      <ImeBadge>CH<Ic w={11} h={12}><path d="M4 .8C9 1 11 5 9 8.500c-2 3-6 3-8 1.500C5 9.500 6.500 5 4 .8z" /></Ic>简</ImeBadge>
      <Watermark>
        <Ic w={42} h={40}>
          <defs>
            <linearGradient id="wa" x1="0" y1="1" x2="1" y2="0"><stop offset="0" stopColor="#4a8fd0" /><stop offset="1" stopColor="#6cc8f0" /></linearGradient>
            <linearGradient id="wb" x1="0" y1="0" x2="1" y2="0"><stop offset="0" stopColor="#d3d75c" /><stop offset="1" stopColor="#62bd84" /></linearGradient>
          </defs>
          <path d="M42 2C22-2 2 9 0 22c-.5 6 3 9 7 11C3 21 20 5 42 2z" fill="url(#wa)" stroke="none" />
          <path d="M6 37c13 3 32-1 35-14 1-5-1-8-5-11 0 13-12 24-30 25z" fill="url(#wb)" stroke="none" />
          <path d="M34 14C20 9 5 18 7 26c2 6 14 5 18-2-5 3-12 3-12 0 0-5 10-10 21-10z" fill="#5aa0dc" stroke="none" />
        </Ic>
        <WmText><WmTop>极光下载站</WmTop><WmUrl>www.xz7.com</WmUrl></WmText>
      </Watermark>
    </App_>
  );
}
